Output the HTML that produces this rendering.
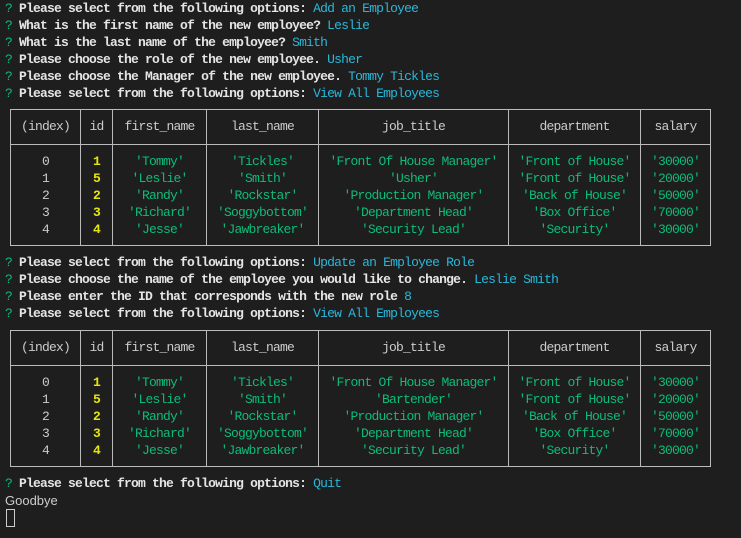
<!DOCTYPE html>
<html><head><meta charset="utf-8"><style>
body{margin:0;background:#1e1e1e;width:741px;height:538px;overflow:hidden;position:relative;font-family:"Liberation Mono",monospace;font-size:13px;letter-spacing:-0.8px;color:#cccccc}
.l{position:absolute;left:5px;height:17px;line-height:17px;white-space:pre}
.q{color:#0dbc79}
.b{font-weight:bold;color:#e5e5e5}
.a{color:#29b8db}
table{position:absolute;left:10px;border-collapse:collapse;table-layout:fixed}
td{border:1px solid #bbbbbb;text-align:center;padding:0;white-space:pre;line-height:17px;vertical-align:top}
tr.h td{height:34px;line-height:34px;color:#cccccc}
tr.d td{height:100px;padding-top:0}
.g{color:#0dbc79}.y{color:#e5e510;font-weight:bold}
.inner{padding-top:8px}
</style></head><body>
<div class="l" style="top:0px"><span class="q">?</span> <span class="b">Please select from the following options:</span> <span class="a">Add an Employee</span></div>
<div class="l" style="top:17px"><span class="q">?</span> <span class="b">What is the first name of the new employee?</span> <span class="a">Leslie</span></div>
<div class="l" style="top:34px"><span class="q">?</span> <span class="b">What is the last name of the employee?</span> <span class="a">Smith</span></div>
<div class="l" style="top:51px"><span class="q">?</span> <span class="b">Please choose the role of the new employee.</span> <span class="a">Usher</span></div>
<div class="l" style="top:68px"><span class="q">?</span> <span class="b">Please choose the Manager of the new employee.</span> <span class="a">Tommy Tickles</span></div>
<div class="l" style="top:85px"><span class="q">?</span> <span class="b">Please select from the following options:</span> <span class="a">View All Employees</span></div>

<table style="top:109px">
<colgroup><col style="width:70px"><col style="width:32px"><col style="width:94px"><col style="width:112px"><col style="width:190px"><col style="width:132px"><col style="width:70px"></colgroup>
<tr class="h"><td>(index)</td><td>id</td><td>first_name</td><td>last_name</td><td>job_title</td><td>department</td><td>salary</td></tr>
<tr class="d"><td><div class="inner">0
1
2
3
4</div></td><td><div class="inner y">1
5
2
3
4</div></td><td><div class="inner g">'Tommy'
'Leslie'
'Randy'
'Richard'
'Jesse'</div></td><td><div class="inner g">'Tickles'
'Smith'
'Rockstar'
'Soggybottom'
'Jawbreaker'</div></td><td><div class="inner g">'Front Of House Manager'
'Usher'
'Production Manager'
'Department Head'
'Security Lead'</div></td><td><div class="inner g">'Front of House'
'Front of House'
'Back of House'
'Box Office'
'Security'</div></td><td><div class="inner g">'30000'
'20000'
'50000'
'70000'
'30000'</div></td></tr>
</table>

<div class="l" style="top:254px"><span class="q">?</span> <span class="b">Please select from the following options:</span> <span class="a">Update an Employee Role</span></div>
<div class="l" style="top:271px"><span class="q">?</span> <span class="b">Please choose the name of the employee you would like to change.</span> <span class="a">Leslie Smith</span></div>
<div class="l" style="top:288px"><span class="q">?</span> <span class="b">Please enter the ID that corresponds with the new role</span> <span class="a">8</span></div>
<div class="l" style="top:305px"><span class="q">?</span> <span class="b">Please select from the following options:</span> <span class="a">View All Employees</span></div>

<table style="top:330px">
<colgroup><col style="width:70px"><col style="width:32px"><col style="width:94px"><col style="width:112px"><col style="width:190px"><col style="width:132px"><col style="width:70px"></colgroup>
<tr class="h"><td>(index)</td><td>id</td><td>first_name</td><td>last_name</td><td>job_title</td><td>department</td><td>salary</td></tr>
<tr class="d"><td><div class="inner">0
1
2
3
4</div></td><td><div class="inner y">1
5
2
3
4</div></td><td><div class="inner g">'Tommy'
'Leslie'
'Randy'
'Richard'
'Jesse'</div></td><td><div class="inner g">'Tickles'
'Smith'
'Rockstar'
'Soggybottom'
'Jawbreaker'</div></td><td><div class="inner g">'Front Of House Manager'
'Bartender'
'Production Manager'
'Department Head'
'Security Lead'</div></td><td><div class="inner g">'Front of House'
'Front of House'
'Back of House'
'Box Office'
'Security'</div></td><td><div class="inner g">'30000'
'20000'
'50000'
'70000'
'30000'</div></td></tr>
</table>

<div class="l" style="top:475px"><span class="q">?</span> <span class="b">Please select from the following options:</span> <span class="a">Quit</span></div>
<div class="l" style="top:492px;font-family:'Liberation Sans',sans-serif;font-size:13px;letter-spacing:0">Goodbye</div>
<div style="position:absolute;left:6px;top:509px;width:7px;height:16px;border:1px solid #cccccc"></div>
</body></html>
